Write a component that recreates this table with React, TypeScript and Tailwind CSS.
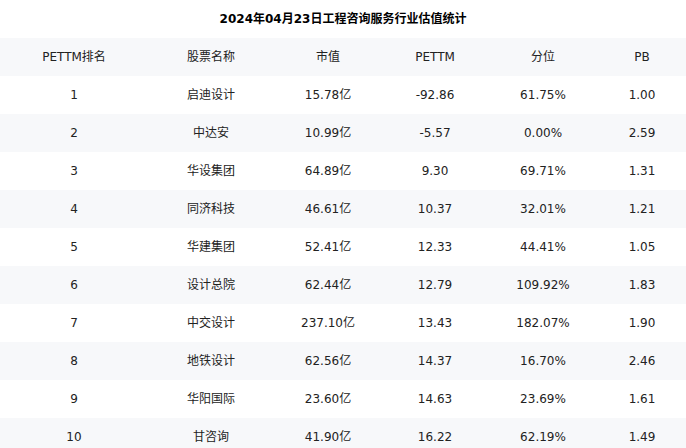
const rows = [
  ["1", "启迪设计", "15.78亿", "-92.86", "61.75%", "1.00"],
  ["2", "中达安", "10.99亿", "-5.57", "0.00%", "2.59"],
  ["3", "华设集团", "64.89亿", "9.30", "69.71%", "1.31"],
  ["4", "同济科技", "46.61亿", "10.37", "32.01%", "1.21"],
  ["5", "华建集团", "52.41亿", "12.33", "44.41%", "1.05"],
  ["6", "设计总院", "62.44亿", "12.79", "109.92%", "1.83"],
  ["7", "中交设计", "237.10亿", "13.43", "182.07%", "1.90"],
  ["8", "地铁设计", "62.56亿", "14.37", "16.70%", "2.46"],
  ["9", "华阳国际", "23.60亿", "14.63", "23.69%", "1.61"],
  ["10", "甘咨询", "41.90亿", "16.22", "62.19%", "1.49"],
];

const headers = ["PETTM排名", "股票名称", "市值", "PETTM", "分位", "PB"];

const grid = "grid grid-cols-[148px_126px_108px_106px_110px_88px] h-[38px] items-center text-center";

export default function App() {
  return (
    <div
      className="w-[686px] h-[448px] overflow-hidden bg-white text-[#222]"
      style={{ fontFamily: '"DejaVu Sans", "Noto Sans CJK SC", sans-serif' }}
    >
      <div className="h-[38px] flex items-center justify-center text-[12px] font-bold text-black">
        2024年04月23日工程咨询服务行业估值统计
      </div>
      <div className={`${grid} bg-[#f7f8fa] text-[12px]`}>
        {headers.map((h) => (
          <div key={h}>{h}</div>
        ))}
      </div>
      {rows.map((r, i) => (
        <div key={r[0]} className={`${grid} text-[12px] ${i % 2 === 1 ? "bg-[#f7f8fa]" : "bg-white"}`}>
          {r.map((c, j) => (
            <div key={j}>{c}</div>
          ))}
        </div>
      ))}
    </div>
  );
}
